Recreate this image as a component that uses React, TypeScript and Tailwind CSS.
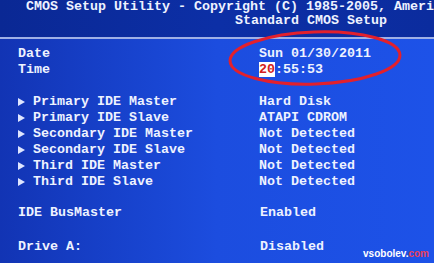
const rows = [
  ['Primary IDE Master', 'Hard Disk'],
  ['Primary IDE Slave', 'ATAPI CDROM'],
  ['Secondary IDE Master', 'Not Detected'],
  ['Secondary IDE Slave', 'Not Detected'],
  ['Third IDE Master', 'Not Detected'],
  ['Third IDE Slave', 'Not Detected'],
];

const Arrow = () => (
  <svg width="7" height="8" viewBox="0 0 7 8" className="shrink-0">
    <path d="M0 0 L7 4 L0 8 Z" fill="#dfe6ff" />
  </svg>
);

const App = () => {
  return (
    <div
      className="relative w-[434px] h-[263px] overflow-hidden text-[#eef2ff] font-bold text-[13.33px]"
      style={{ fontFamily: '"Liberation Mono", "DejaVu Sans Mono", monospace' }}
    >
      {/* header band */}
      <div className="h-[37px] bg-gradient-to-r from-[#0a2894] via-[#0c2fa6] to-[#0b2c9e] leading-[14px]">
        <div className="pl-[26px] whitespace-nowrap">CMOS Setup Utility - Copyright (C) 1985-2005, Ameri</div>
        <div className="pl-[235px] whitespace-nowrap">Standard CMOS Setup</div>
      </div>
      <div className="h-[2px] bg-[#9fb0e6]" />

      {/* main panel */}
      <div className="h-[224px] bg-gradient-to-r from-[#1234b4] via-[#1c4ddf] to-[#1d52e8] pl-[18px] pt-[7px] leading-[16px]">
        <div className="flex">
          <div className="w-[241px]">Date</div>
          <div>Sun 01/30/2011</div>
        </div>
        <div className="flex">
          <div className="w-[241px]">Time</div>
          <div>
            <span className="bg-white text-[#d42020]">20</span>:55:53
          </div>
        </div>

        <div className="mt-[16px] flex flex-col">
          {rows.map(([label, value]) => (
            <div key={label} className="flex h-[16px] items-center">
              <div className="w-[241px] flex items-center gap-[8px]">
                <Arrow />
                <span>{label}</span>
              </div>
              <div>{value}</div>
            </div>
          ))}
        </div>

        <div className="mt-[15px] flex">
          <div className="w-[242px]">IDE BusMaster</div>
          <div>Enabled</div>
        </div>
        <div className="mt-[18px] flex">
          <div className="w-[242px]">Drive A:</div>
          <div>Disabled</div>
        </div>
      </div>

      {/* red marker ellipse */}
      <svg className="absolute left-0 top-0 pointer-events-none" width="434" height="263">
        <ellipse cx="315" cy="58" rx="85" ry="26" fill="none" stroke="#e3202c" strokeWidth="3" transform="rotate(-2 315 58)" />
      </svg>

      {/* watermark */}
      <div
        className="absolute right-[5px] bottom-[4px] text-[10px] leading-none font-bold"
        style={{ fontFamily: '"Liberation Sans", Arial, sans-serif' }}
      >
        <span className="text-white">vsobolev.</span>
        <span className="text-[#e8405a]">com</span>
      </div>
    </div>
  );
};

export default App;
